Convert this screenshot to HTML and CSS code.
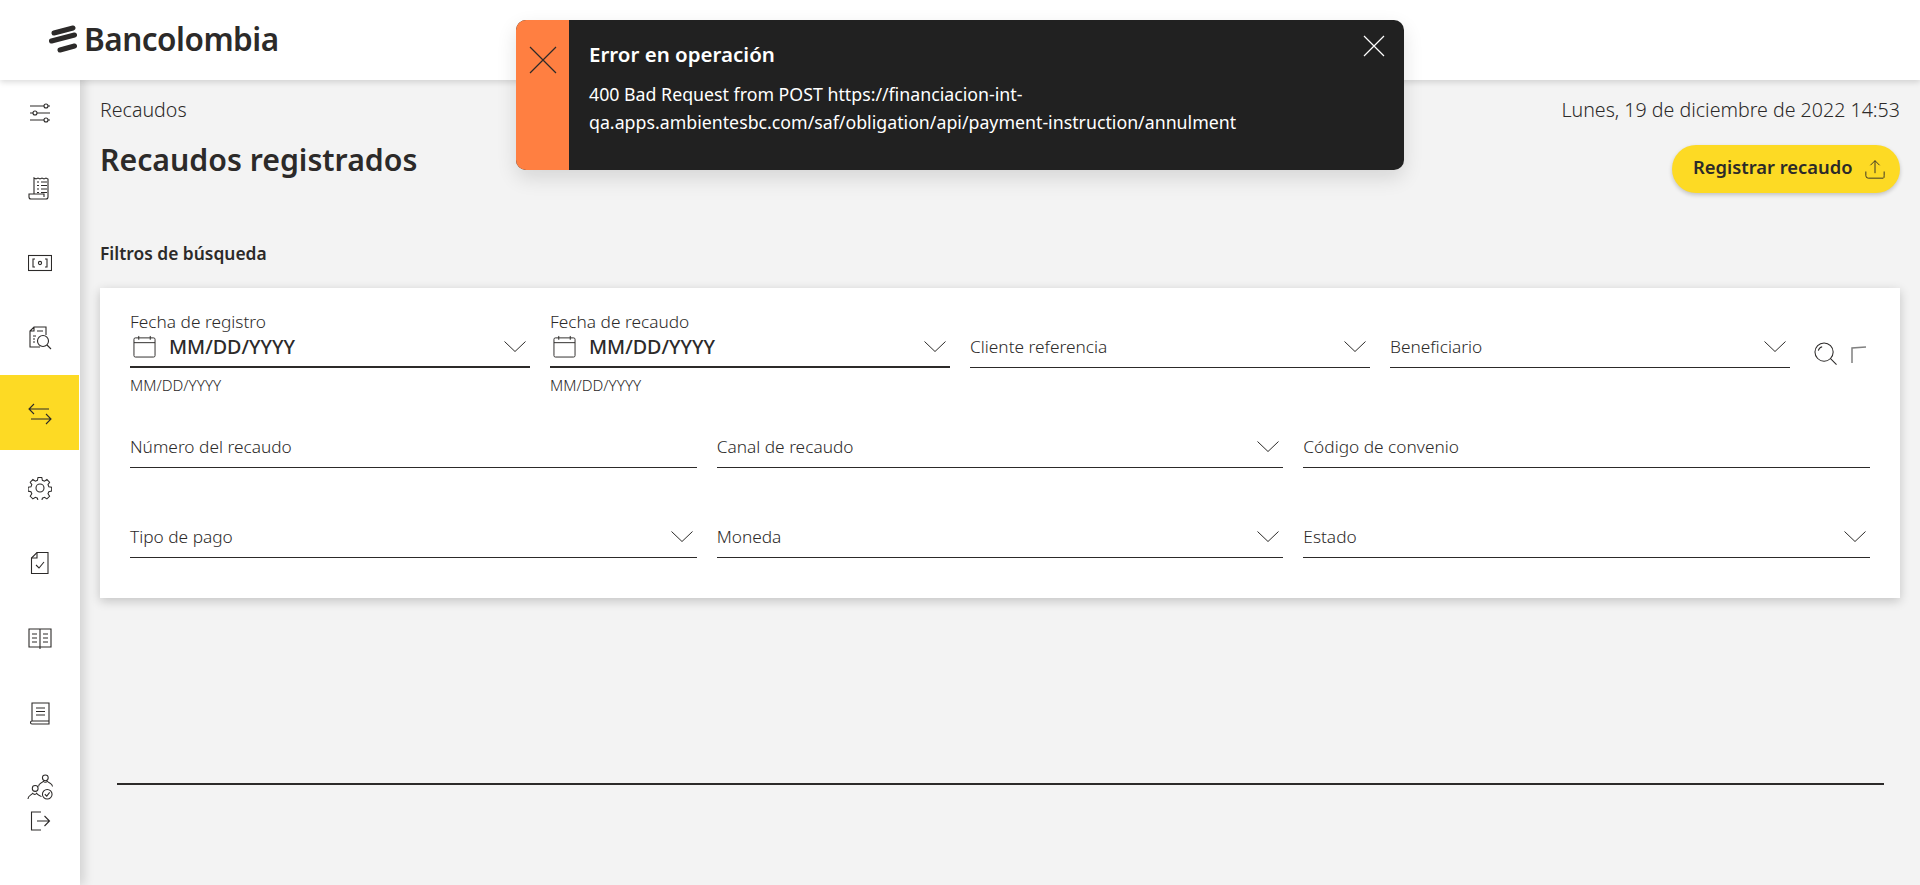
FILE: index.html
```html
<!DOCTYPE html>
<html lang="es">
<head>
    <meta charset="UTF-8">
    <meta name="viewport" content="width=device-width, initial-scale=1.0">
    <title>Recaudos registrados</title>
    <link rel="stylesheet" href="styles.css">
</head>
<body>
    <header class="topbar">
        <div class="logo">
            <svg class="logo-mark" viewBox="0 0 28 28" width="28" height="28">
                <path d="M5 8 24 3M2.500 16 25.500 10M11 25 25.500 21"/>
            </svg>
            <span class="logo-text">Bancolombia</span>
        </div>
    </header>

    <div class="layout">
        <nav class="sidebar">
            <a class="nav-item">
                <svg class="icon" viewBox="0 0 24 24"><path d="M2 5h14M20 5h2M2 12h3M9 12h13M2 19h14M20 19h2"/><circle cx="18" cy="5" r="2"/><circle cx="7" cy="12" r="2"/><circle cx="18" cy="19" r="2"/></svg>
            </a>
            <a class="nav-item">
                <svg class="icon" viewBox="0 0 24 24"><path d="M6 18V2l2 1 2-1 2 1 2-1 2 1 2-1 2 1v18a2 2 0 0 1-2 2H3a2 2 0 0 1-2-2v-3h15v3"/><path d="M9 6h2M13 6h6M9 9.500h2M13 9.500h6M9 13h2M13 13h6M9 16.500h2M13 16.500h6"/></svg>
            </a>
            <a class="nav-item">
                <svg class="icon" viewBox="0 0 24 24"><rect x="0.500" y="4.500" width="23" height="15"/><path d="M7 8H5v8h2M17 8h2v8h-2"/><circle cx="12" cy="12" r="1.600"/></svg>
            </a>
            <a class="nav-item">
                <svg class="icon" viewBox="0 0 24 24"><path d="M12 21H2V5l4-4h12v8M2 5h4V1M9 5h6M5 10h3M5 13h2M5 16h2"/><circle cx="15" cy="15" r="5.500"/><path d="M19 19l4 4"/></svg>
            </a>
            <a class="nav-item active">
                <svg class="icon" viewBox="0 0 24 24"><path d="M1 8h20M6 3 1 8l5 5M3 18h20M18 13l5 5-5 5"/></svg>
            </a>
            <a class="nav-item">
                <svg class="icon" viewBox="0 0 24 24"><path d="M10 1h4l.6 3 2.200.9 2.600-1.700 2.800 2.800-1.700 2.600.9 2.200 3 .6v4l-3 .6-.9 2.200 1.700 2.600-2.800 2.800-2.600-1.700-2.200.9-.6 3h-4l-.6-3-2.200-.9-2.600 1.700-2.800-2.800 1.700-2.600-.9-2.200-3-.6v-4l3-.6.9-2.200-1.700-2.600 2.800-2.800 2.600 1.700 2.200-.9z" transform="translate(.5 .5) scale(.95)"/><circle cx="12" cy="12" r="4"/></svg>
            </a>
            <a class="nav-item">
                <svg class="icon" viewBox="0 0 24 24"><path d="M9 1.500h11v21H3.500V7z"/><path d="M3.500 7H9V1.500"/><path d="m8 14 3 3 5-6"/></svg>
            </a>
            <a class="nav-item">
                <svg class="icon" viewBox="0 0 24 24"><path d="M12 3H1v18h22V3H12zM12 3v20"/><path d="M4 8h5M4 12h5M4 16h5M15 8h5M15 12h5M15 16h5"/></svg>
            </a>
            <a class="nav-item">
                <svg class="icon" viewBox="0 0 24 24"><path d="M4 20V2h17v21H4a1.500 1.500 0 0 1 0-3h17"/><path d="M8 7h9M8 10.500h9M8 14h9"/></svg>
            </a>
            <a class="nav-item">
                <svg class="icon icon-team" viewBox="0 0 28 28"><circle cx="19" cy="4" r="3"/><path d="M12 13c0-4 3-3 5-5.500 1 1.500 3 1.500 4 0 2 2.500 5 1.500 5.500 5.500"/><circle cx="8.500" cy="15" r="3"/><path d="M1 26c0-4 3-3.500 5-6 1 1.500 3 1.500 4 0 1 2 3 2 5 3.500"/><circle cx="21" cy="21" r="5"/><path d="m18.500 21 2 2 3-4"/></svg>
            </a>
            <a class="nav-item nav-exit">
                <svg class="icon" viewBox="0 0 24 24"><path d="M13 3H3.500v18H13M9 12h12M16.500 7l5 5-5 5"/></svg>
            </a>
        </nav>

        <main class="content">
            <div class="page-top">
                <span class="crumb">Recaudos</span>
                <span class="date">Lunes, 19 de diciembre de 2022 14:53</span>
            </div>
            <div class="page-head">
                <h1>Recaudos registrados</h1>
                <button class="btn-register">
                    <span class="btn-label">Registrar recaudo</span>
                    <svg class="icon btn-icon" viewBox="0 0 24 24"><path d="M12 17V2M6.500 7.500 12 2l5.500 5.500M1 15v5a3 3 0 0 0 3 3h18a1 3 0 0 0 1-3v-5"/></svg>
                </button>
            </div>

            <h2>Filtros de búsqueda</h2>

            <section class="filters">
                <div class="row row-top">
                    <div class="field date-field">
                        <label>Fecha de registro</label>
                        <div class="control strong">
                            <svg class="icon cal" viewBox="0 0 24 24"><rect x="1" y="3" width="22" height="20" rx="1.500"/><path d="M1 8h22M6 1v4M18 1v4"/></svg>
                            <span class="value">MM/DD/YYYY</span>
                            <svg class="chev" viewBox="0 0 22 11"><path d="m.5.5 10.500 10L21.500.5"/></svg>
                        </div>
                        <small>MM/DD/YYYY</small>
                    </div>
                    <div class="field date-field">
                        <label>Fecha de recaudo</label>
                        <div class="control strong">
                            <svg class="icon cal" viewBox="0 0 24 24"><rect x="1" y="3" width="22" height="20" rx="1.500"/><path d="M1 8h22M6 1v4M18 1v4"/></svg>
                            <span class="value">MM/DD/YYYY</span>
                            <svg class="chev" viewBox="0 0 22 11"><path d="m.5.5 10.500 10L21.500.5"/></svg>
                        </div>
                        <small>MM/DD/YYYY</small>
                    </div>
                    <div class="field">
                        <div class="control"><span class="hint">Cliente referencia</span><svg class="chev" viewBox="0 0 22 11"><path d="m.5.5 10.500 10L21.500.5"/></svg></div>
                    </div>
                    <div class="field">
                        <div class="control"><span class="hint">Beneficiario</span><svg class="chev" viewBox="0 0 22 11"><path d="m.5.5 10.500 10L21.500.5"/></svg></div>
                    </div>
                    <div class="tools">
                        <svg class="icon tool-search" viewBox="0 0 24 24"><circle cx="10.500" cy="10.500" r="9.500"/><path d="m17 17 6.500 6.500M4.500 9a5.500 5.500 0 0 1 4-4"/></svg>
                        <svg class="tool-eraser" viewBox="0 0 16 18"><path d="M1 17V2l14-1"/></svg>
                    </div>
                </div>
                <div class="row">
                    <div class="field"><div class="control"><span class="hint">Número del recaudo</span></div></div>
                    <div class="field"><div class="control"><span class="hint">Canal de recaudo</span><svg class="chev" viewBox="0 0 22 11"><path d="m.5.5 10.500 10L21.500.5"/></svg></div></div>
                    <div class="field"><div class="control"><span class="hint">Código de convenio</span></div></div>
                </div>
                <div class="row">
                    <div class="field"><div class="control"><span class="hint">Tipo de pago</span><svg class="chev" viewBox="0 0 22 11"><path d="m.5.5 10.500 10L21.500.5"/></svg></div></div>
                    <div class="field"><div class="control"><span class="hint">Moneda</span><svg class="chev" viewBox="0 0 22 11"><path d="m.5.5 10.500 10L21.500.5"/></svg></div></div>
                    <div class="field"><div class="control"><span class="hint">Estado</span><svg class="chev" viewBox="0 0 22 11"><path d="m.5.5 10.500 10L21.500.5"/></svg></div></div>
                </div>
            </section>

            <div class="divider"></div>
        </main>
    </div>

    <div class="toast">
        <div class="toast-side">
            <svg class="toast-x" viewBox="0 0 28 28"><path d="m1 1 26 26M27 1 1 27"/></svg>
        </div>
        <div class="toast-body">
            <h3>Error en operación</h3>
            <p>400 Bad Request from POST https://financiacion-int-<br>qa.apps.ambientesbc.com/saf/obligation/api/payment-instruction/annulment</p>
        </div>
        <svg class="toast-close" viewBox="0 0 22 22"><path d="m1 1 20 20M21 1 1 21"/></svg>
    </div>
</body>
</html>
```

FILE: styles.css
```css
* {
    box-sizing: border-box;
}
body {
    font-family: "Noto Sans", "Open Sans", sans-serif;
    background: #f3f3f3;
    color: #2c2a29;
    margin: 0;
    height: 885px;
    overflow: hidden;
}
.topbar {
    height: 80px;
    background: #ffffff;
    box-shadow: 0 2px 6px rgba(0, 0, 0, 0.15);
    display: flex;
    align-items: center;
    padding-left: 49px;
    position: relative;
    z-index: 2;
}
.logo {
    display: flex;
    align-items: center;
    gap: 7px;
    margin-top: -3px;
}
.logo-mark {
    fill: none;
    stroke: #2c2a29;
    stroke-width: 5;
    stroke-linecap: round;
}
.logo-text {
    font-size: 31.500px;
    font-weight: 600;
    letter-spacing: -0.5px;
    line-height: 40px;
}
.layout {
    display: flex;
    height: 805px;
}
.sidebar {
    width: 80px;
    height: 810px;
    margin-top: -5px;
    flex-shrink: 0;
    background: #ffffff;
    box-shadow: 4px 0 10px rgba(0, 0, 0, 0.14);
    position: relative;
    z-index: 1;
}
.nav-item {
    display: flex;
    align-items: center;
    justify-content: center;
    height: 75px;
}
.nav-item.active {
    background: #fdda24;
    margin-right: 1px;
}
.nav-exit {
    height: 24px;
    margin-top: -16px;
}
.icon {
    width: 24px;
    height: 24px;
    fill: none;
    stroke: #2c2a29;
    stroke-width: 1.1;
}
.icon-team {
    width: 27px;
    height: 27px;
}
.content {
    flex: 1;
    padding: 0 20px;
    position: relative;
}
.page-top {
    display: flex;
    justify-content: space-between;
    align-items: center;
    height: 24px;
    margin-top: 17px;
}
.crumb,
.date {
    font-size: 19.600px;
    font-weight: 300;
}
.page-head {
    display: flex;
    justify-content: space-between;
    align-items: flex-start;
    margin-top: 18px;
}
h1 {
    font-size: 30.250px;
    font-weight: 600;
    line-height: 42px;
    margin: 0;
}
.btn-register {
    display: flex;
    align-items: center;
    gap: 12px;
    width: 228px;
    height: 48px;
    margin-top: 6px;
    padding: 0 0 0 21px;
    background: #fdda24;
    color: #2c2a29;
    border: none;
    border-radius: 24px;
    box-shadow: 0 2px 4px rgba(0, 0, 0, 0.2);
    font-family: inherit;
    font-size: 18.350px;
    font-weight: 600;
}
.btn-label {
    margin-bottom: 5px;
}
.btn-icon {
    width: 20px;
    height: 20px;
}
h2 {
    font-size: 17.400px;
    font-weight: 600;
    line-height: 22px;
    margin: 49px 0 24px;
}
.filters {
    height: 310px;
    background: #ffffff;
    box-shadow: 0 3px 10px rgba(0, 0, 0, 0.2);
    padding: 22px 30px;
}
.row {
    display: grid;
    grid-template-columns: repeat(3, 1fr);
    gap: 20px;
    margin-bottom: 30px;
}
.row-top {
    grid-template-columns: 400px 400px 400px 400px 1fr;
    height: 98px;
    align-items: start;
    margin-bottom: 0;
}
.field {
    display: flex;
    flex-direction: column;
    justify-content: flex-end;
    height: 60px;
}
.row-top .field {
    height: 58px;
}
.row-top .date-field {
    height: auto;
}
label {
    font-size: 17.300px;
    font-weight: 300;
    line-height: 24px;
}
.control {
    display: flex;
    align-items: center;
    height: 36px;
    padding: 0 4px 7px 0;
    border-bottom: 1px solid #2c2a29;
    font-size: 17.300px;
}
.control.strong {
    height: 34px;
    padding-bottom: 7px;
    border-bottom-width: 2px;
}
.hint {
    flex: 1;
    font-weight: 300;
}
.value {
    flex: 1;
    font-size: 19.700px;
    font-weight: 500;
}
.cal {
    width: 23px;
    height: 23px;
    margin: 0 13px 0 3px;
    stroke-width: 1;
}
.chev {
    width: 22px;
    height: 11px;
    fill: none;
    stroke: #2c2a29;
    stroke-width: 1;
}
small {
    display: block;
    font-size: 15.200px;
    font-weight: 300;
    line-height: 20px;
    margin-top: 7px;
}
.tools {
    display: flex;
    align-items: flex-end;
    gap: 14px;
    height: 55px;
    padding-left: 4px;
}
.tool-search {
    width: 23px;
    height: 23px;
}
.tool-eraser {
    width: 16px;
    height: 18px;
    margin-bottom: 1px;
    fill: none;
    stroke: #808080;
    stroke-width: 1.5;
}
.divider {
    position: absolute;
    left: 37px;
    right: 36px;
    top: 703px;
    height: 2px;
    background: #2c2a29;
}
.toast {
    position: absolute;
    left: 516px;
    top: 20px;
    width: 888px;
    height: 150px;
    display: flex;
    background: #212121;
    border-radius: 10px;
    overflow: hidden;
    z-index: 5;
    box-shadow: 0 8px 20px rgba(0, 0, 0, 0.12);
}
.toast-side {
    width: 53px;
    background: #ff7f41;
    display: flex;
    justify-content: center;
    padding-top: 26px;
}
.toast-x {
    width: 28px;
    height: 28px;
    fill: none;
    stroke: #2c2a29;
    stroke-width: 1.2;
}
.toast-body {
    padding: 21px 20px;
    color: #ffffff;
}
.toast-body h3 {
    font-size: 20.500px;
    font-weight: 600;
    line-height: 26px;
    margin: 0 0 13px;
}
.toast-body p {
    font-size: 17.750px;
    line-height: 28px;
    margin: 0;
}
.toast-close {
    position: absolute;
    right: 19px;
    top: 15px;
    width: 22px;
    height: 22px;
    fill: none;
    stroke: #ffffff;
    stroke-width: 1.2;
}
```
